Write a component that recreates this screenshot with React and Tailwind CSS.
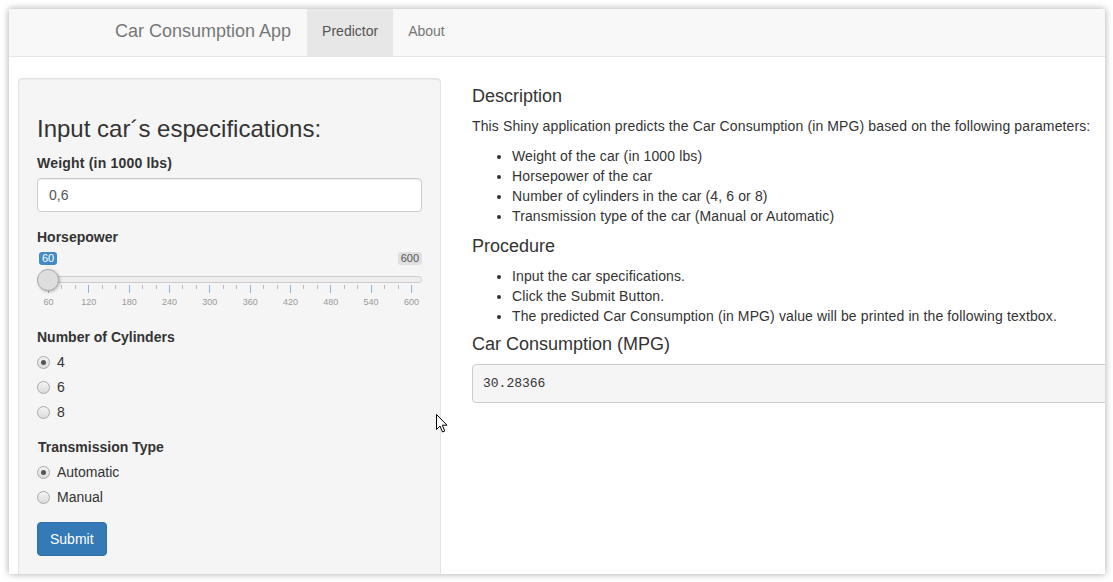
import React from "react";

const majors = [60, 120, 180, 240, 300, 360, 420, 480, 540, 600];
const STEP = 40.33;

const Radio = ({ label, checked }) => (
  <div className="flex items-center h-[20px] leading-[20px]">
    <span className="w-[13px] h-[13px] rounded-full border border-[#a9a9a9] bg-gradient-to-b from-[#f4f4f4] to-[#dcdcdc] flex items-center justify-center">
      {checked && <span className="w-[5px] h-[5px] rounded-full bg-[#555]" />}
    </span>
    <span className="ml-[7px] text-[14px] text-[#333]">{label}</span>
  </div>
);

const Slider = () => (
  <div className="relative h-[60px] mt-[5px]">
    {/* value labels */}
    <div className="absolute left-[2px] top-0 h-[13px] px-[3px] rounded-[3px] bg-[#428bca] text-white text-[11px] leading-[13px]">
      60
    </div>
    <div className="absolute right-0 top-0 h-[13px] px-[3px] rounded-[3px] bg-[#e0e0e0] text-[#555] text-[11px] leading-[13px]">
      600
    </div>
    {/* track */}
    <div className="absolute left-0 right-0 top-[24px] h-[7px] rounded-full bg-[#eee] border border-[#ccc]" />
    {/* grid */}
    {majors.map((v, i) => {
      const x = 11 + i * STEP;
      return (
        <React.Fragment key={v}>
          <div className="absolute top-[33px] h-[8px] w-px bg-[#8eb4dc]" style={{ left: x }} />
          <div
            className="absolute top-[45px] -translate-x-1/2 text-[9px] leading-[10px] text-[#999]"
            style={{ left: x + 0.5 }}
          >
            {v}
          </div>
          {i < majors.length - 1 && (
            <>
              <div className="absolute top-[33px] h-[4px] w-px bg-[#bbb]" style={{ left: x + STEP / 3 }} />
              <div className="absolute top-[33px] h-[4px] w-px bg-[#bbb]" style={{ left: x + (2 * STEP) / 3 }} />
            </>
          )}
        </React.Fragment>
      );
    })}
    {/* thumb */}
    <div className="absolute left-0 top-[17px] w-[22px] h-[22px] rounded-full bg-[#dedede] border border-[#ababab] shadow-[1px_1px_3px_rgba(0,0,0,0.25)]" />
  </div>
);

export default function App() {
  return (
    <div className="w-[1113px] h-[582px] bg-white pt-[9px] pl-[9px] font-['Liberation_Sans',Arial,sans-serif] text-[#333] relative">
      <div className="w-[1096px] h-[565px] bg-white overflow-hidden shadow-[0_0_7px_rgba(0,0,0,0.35)]">
        {/* Navbar */}
        <div className="h-[48px] bg-[#f8f8f8] border-b border-[#e7e7e7] flex items-stretch pl-[106px]">
          <div className="pt-[12px] leading-[20px] text-[18px] text-[#777] pr-[16px]">Car Consumption App</div>
          <div className="pt-[12px] leading-[20px] text-[14px] text-[#555] bg-[#e7e7e7] px-[15px]">Predictor</div>
          <div className="pt-[12px] leading-[20px] text-[14px] text-[#777] px-[15px]">About</div>
        </div>

        <div className="flex items-start">
          {/* Sidebar */}
          <div className="ml-[9px] mt-[21px] w-[423px] h-[600px] shrink-0 bg-[#f5f5f5] border border-[#e3e3e3] rounded-[4px] px-[18px] pt-[37px] shadow-[inset_0_1px_1px_rgba(0,0,0,0.05)]">
            <h3 className="text-[24px] leading-[26px]">Input car´s especifications:</h3>

            <div className="mt-[11px] text-[14px] leading-[20px] font-bold tracking-[0.2px]">Weight (in 1000 lbs)</div>
            <div className="mt-[5px] h-[34px] bg-white border border-[#ccc] rounded-[4px] px-[11px] text-[14px] leading-[32px] text-[#555] shadow-[inset_0_1px_1px_rgba(0,0,0,0.075)]">
              0,6
            </div>

            <div className="mt-[15px] text-[14px] leading-[20px] font-bold">Horsepower</div>
            <Slider />

            <div className="mt-[15px] text-[14px] leading-[20px] font-bold">Number of Cylinders</div>
            <div className="mt-[5px] flex flex-col gap-[5px]">
              <Radio label="4" checked />
              <Radio label="6" />
              <Radio label="8" />
            </div>

            <div className="mt-[15px] ml-px text-[14px] leading-[20px] font-bold">Transmission Type</div>
            <div className="mt-[5px] flex flex-col gap-[5px]">
              <Radio label="Automatic" checked />
              <Radio label="Manual" />
            </div>

            <button className="mt-[15px] h-[34px] px-[12px] bg-[#337ab7] border border-[#2e6da4] rounded-[4px] text-white text-[14px] leading-[20px]">
              Submit
            </button>
          </div>

          {/* Main panel */}
          <div className="ml-[31px] mt-[29px] w-[720px] shrink-0">
            <h4 className="text-[18px] leading-[20px]">Description</h4>
            <p className="mt-[10px] text-[14px] leading-[20px] tracking-[0.12px]">
              This Shiny application predicts the Car Consumption (in MPG) based on the following parameters:
            </p>
            <ul className="mt-[10px] list-disc pl-[40px] text-[14px] leading-[20px] tracking-[0.12px]">
              <li>Weight of the car (in 1000 lbs)</li>
              <li>Horsepower of the car</li>
              <li>Number of cylinders in the car (4, 6 or 8)</li>
              <li>Transmission type of the car (Manual or Automatic)</li>
            </ul>
            <h4 className="mt-[10px] text-[18px] leading-[20px]">Procedure</h4>
            <ul className="mt-[10px] list-disc pl-[40px] text-[14px] leading-[20px] tracking-[0.12px]">
              <li>Input the car specifications.</li>
              <li>Click the Submit Button.</li>
              <li>The predicted Car Consumption (in MPG) value will be printed in the following textbox.</li>
            </ul>
            <h4 className="mt-[8px] text-[18px] leading-[20px]">Car Consumption (MPG)</h4>
            <div className="mt-[10px] h-[39px] bg-[#f5f5f5] border border-[#ccc] rounded-[4px] px-[10px] font-['Liberation_Mono','Courier_New',monospace] text-[13px] leading-[37px] text-[#333]">
              30.28366
            </div>
          </div>
        </div>
      </div>

      {/* mouse pointer */}
      <svg className="absolute left-[436px] top-[414px]" width="13" height="20" viewBox="0 0 13 20">
        <path d="M0.5 0.5 L0.5 15.5 L4 12 L6.5 18 L8.8 17 L6.3 11.2 L11 11.2 Z" fill="#fff" stroke="#000" strokeWidth="1" strokeLinejoin="miter" />
      </svg>
    </div>
  );
}
